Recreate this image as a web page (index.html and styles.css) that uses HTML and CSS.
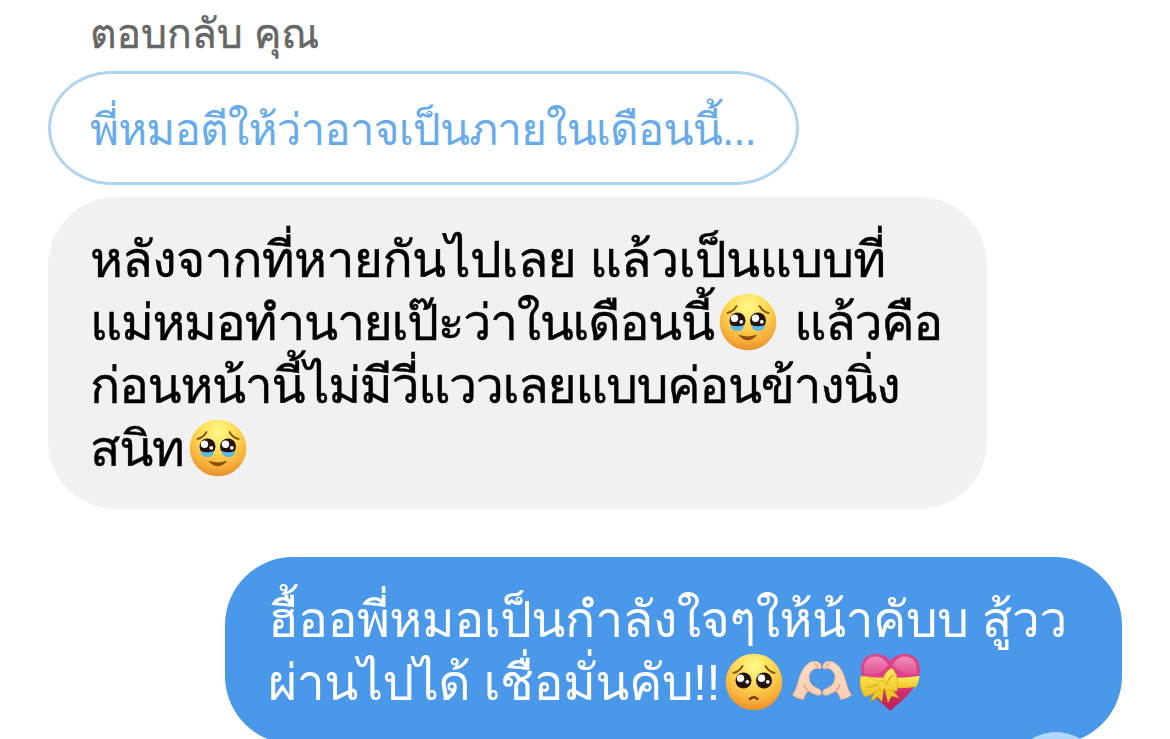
FILE: index.html
```html
<!DOCTYPE html>
<html lang="th">
<head>
    <meta charset="UTF-8">
    <meta name="viewport" content="width=device-width, initial-scale=1.0">
    <title>Chat</title>
    <link rel="stylesheet" href="styles.css">
</head>
<body>
    <!-- Emoji shapes used in the messages -->
    <svg class="defs" width="0" height="0">
        <defs>
            <radialGradient id="skin" cx="50%" cy="22%" r="80%">
                <stop offset="0" stop-color="#fff98c"/>
                <stop offset="0.4" stop-color="#fddc55"/>
                <stop offset="0.75" stop-color="#f8b23c"/>
                <stop offset="1" stop-color="#e88a28"/>
            </radialGradient>
            <linearGradient id="hand" x1="0" y1="0" x2="0" y2="1">
                <stop offset="0" stop-color="#fbdcc4"/>
                <stop offset="1" stop-color="#f8cfb2"/>
            </linearGradient>
            <linearGradient id="heart" x1="0" y1="0" x2="0" y2="1">
                <stop offset="0" stop-color="#d9468c"/>
                <stop offset="0.4" stop-color="#df3f86"/>
                <stop offset="1" stop-color="#bd1a52"/>
            </linearGradient>
            <linearGradient id="shine" x1="0" y1="0" x2="0" y2="1">
                <stop offset="0" stop-color="#fbb5d6"/>
                <stop offset="1" stop-color="#e3569a"/>
            </linearGradient>
            <linearGradient id="ribbon" x1="0" y1="0" x2="0" y2="1">
                <stop offset="0" stop-color="#ffed63"/>
                <stop offset="1" stop-color="#eec21f"/>
            </linearGradient>
            <symbol id="face" viewBox="0 0 60 60">
                <circle cx="30" cy="30" r="28.3" fill="url(#skin)"/>
                <path d="M9.5 21Q15.500 19.500 18.500 14M50.500 21Q44.500 19.500 41.500 14" fill="none" stroke="#8a5212" stroke-width="1.9" stroke-linecap="round"/>
                <circle cx="19.500" cy="28.500" r="8" fill="#24120c"/>
                <circle cx="40" cy="28.500" r="8" fill="#24120c"/>
                <circle cx="16.500" cy="26.300" r="3.700" fill="#fff"/>
                <circle cx="37.500" cy="26.300" r="3.700" fill="#fff"/>
                <circle cx="23.300" cy="29.800" r="1.900" fill="#fff"/>
                <circle cx="43.800" cy="29.800" r="1.900" fill="#fff"/>
            </symbol>
            <symbol id="tears" viewBox="0 0 60 60">
                <use href="#face"/>
                <path d="M12.500 33Q19.500 35.500 26 33Q25.500 39 19.500 39Q13 39 12.500 33ZM33.500 33Q40 35.500 47 33Q46.500 39 40.500 39Q34 39 33.500 33Z" fill="#5cb9e8"/>
                <path d="M21.500 43.500Q29.700 51.500 38 43.500Q29.700 46.500 21.500 43.500Z" fill="#8f4d10" stroke="#8f4d10" stroke-width="1.200" stroke-linejoin="round"/>
            </symbol>
            <symbol id="pleading" viewBox="0 0 60 60">
                <use href="#face"/>
                <path d="M26 47Q29.800 43.500 33.500 47" fill="none" stroke="#713b12" stroke-width="2.400" stroke-linecap="round"/>
            </symbol>
            <symbol id="hands" viewBox="0 0 60 60">
                <g id="half">
                    <path d="M.5 43Q4 38 5.500 32C8 22 11 15 17 11Q20 8.500 25 9.500Q29.500 11 29.300 15.500Q28.500 17.500 25.500 16.500C21 16 17.500 20 17 25Q17 30 21 34L27 37Q30 39 29.200 42Q27 44.500 23 42.500L16 39Q13 42 11.500 47.500Q5 47 .5 43Z" fill="url(#hand)" stroke="#e9a688" stroke-width=".8"/>
                    <path d="M22 11.500Q25 12 26.500 15.500M16 38.500Q12.500 36 12 32" fill="none" stroke="#dd9b82" stroke-width="1.100"/>
                </g>
                <use href="#half" transform="translate(60 0) scale(-1 1)"/>
            </symbol>
            <symbol id="gift" viewBox="0 0 60 60">
                <path d="M30.500 59C20 49 1 36 1 17C1 0 22-3 30.500 9C39-3 60 0 60 17C60 36 41 49 30.500 59Z" fill="url(#heart)"/>
                <path d="M4 15C5 3 21 0 28 13C23 22 12 24 4 22ZM33 13C39 0 55 3 57 16L56 22Q40 23 33 13Z" fill="url(#shine)" opacity=".65"/>
                <path d="M1.500 24Q30 28 59.500 24Q58.500 31 56 35Q30 38 5 34Z" fill="url(#ribbon)"/>
                <path d="M18 31L10 50L17.500 45L22 50L24 35L28 51L31.500 44L39 46L27 31Z" fill="#efc727" stroke="#bc8b13" stroke-width=".6"/>
                <path d="M20 31Q8 22 0 25Q-1 37 5 45Q15 42 21 35ZM22 31Q24 19 32 16Q40 25 37 39Q29 40 22 35Z" fill="url(#ribbon)" stroke="#d6a51a" stroke-width=".6"/>
                <path d="M6 36Q12 35 18 32M33 23Q28 27 27 32" fill="none" stroke="#d3a51c" stroke-width="1.100"/>
                <ellipse cx="22" cy="33" rx="4" ry="4.500" fill="#f7d63c" stroke="#d6a51a" stroke-width=".6"/>
            </symbol>
        </defs>
    </svg>

    <main class="chat">
        <p class="reply-label">ตอบกลับ คุณ</p>
        <div class="bubble quote"><span class="line">พี่หมอตีให้ว่าอาจเป็นภายในเดือนนี้...</span></div>
        <div class="bubble received">
            <span class="line">หลังจากที่หายกันไปเลย แล้วเป็นแบบที่</span>
            <span class="line tight">แม่หมอทำนายเป๊ะว่าในเดือนนี้<svg class="emoji"><use href="#tears"/></svg> แล้วคือ</span>
            <span class="line tight">ก่อนหน้านี้ไม่มีวี่แววเลยแบบค่อนข้างนิ่ง</span>
            <span class="line tight">สนิท<svg class="emoji"><use href="#tears"/></svg></span>
        </div>
        <div class="bubble sent">
            <span class="line">ฮื้ออพี่หมอเป็นกำลังใจๆให้น้าคับบ สู้วว</span>
            <span class="line">ผ่านไปได้ เชื่อมั่นคับ!!<svg class="emoji"><use href="#pleading"/></svg><svg class="emoji"><use href="#hands"/></svg><svg class="emoji"><use href="#gift"/></svg></span>
            <span class="reaction"></span>
        </div>
    </main>
</body>
</html>
```
FILE: styles.css
```css
* {
    box-sizing: border-box;
}

body {
    margin: 0;
    background-color: #fff;
    font-family: "Liberation Sans", Loma, sans-serif;
}

.defs {
    position: absolute;
}

.chat {
    display: flex;
    flex-direction: column;
    align-items: flex-start;
    height: 739px;
    padding: 0 48px;
    overflow: hidden;
}

.reply-label {
    flex: none;
    margin: 0 0 0 42px;
    height: 71px;
    line-height: 68px;
    font-size: 41px;
    letter-spacing: -0.1px;
    color: #666;
    -webkit-text-stroke: 0.4px;
    white-space: nowrap;
}

.bubble {
    position: relative;
    flex: none;
    -webkit-text-stroke: 0.4px;
}

.line {
    display: block;
    height: 63px;
    line-height: 63px;
    white-space: nowrap;
}

.quote {
    width: 751px;
    height: 114px;
    padding: 24px 39px;
    border: 3px solid #aed4f2;
    border-radius: 64px / 57px;
    font-size: 44px;
    letter-spacing: -0.85px;
    color: #68abeb;
    -webkit-text-stroke: 0;
}

.received {
    width: 939px;
    height: 312px;
    margin-top: 12px;
    padding: 32px 42px;
    border-radius: 68px;
    background-color: #f1f1f1;
    font-size: 50px;
    letter-spacing: -0.65px;
    color: #000;
}

.tight {
    letter-spacing: -1.35px;
}

.sent {
    align-self: flex-end;
    width: 897px;
    height: 187px;
    margin-top: 48px;
    padding: 32px 43px;
    border-radius: 68px;
    background-color: #4a98e9;
    font-size: 50px;
    letter-spacing: -0.55px;
    color: #fff;
    -webkit-text-stroke: 0;
}

.emoji {
    width: 60px;
    height: 60px;
    margin: 0 4px;
    vertical-align: -12px;
}

.reaction {
    position: absolute;
    left: 785px;
    top: 175px;
    width: 92px;
    height: 92px;
    border-radius: 50%;
    background-color: #aed8fb;
}
```
